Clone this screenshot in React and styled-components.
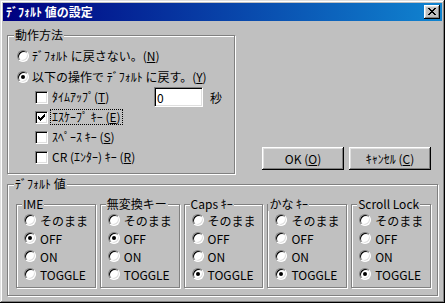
import React from "react";
import styled, { createGlobalStyle } from "styled-components";

const GlobalStyle = createGlobalStyle`
  html, body {
    margin: 0;
    padding: 0;
    background: #c0c0c0;
  }
  body {
    font-family: "Noto Sans CJK JP", "Noto Sans", sans-serif;
    font-size: 12px;
    color: #000;
  }
`;

const Window = styled.div`
  width: 445px;
  height: 303px;
  box-sizing: border-box;
  padding: 3px;
  background: #c0c0c0;
  box-shadow: inset -1px -1px #000, inset 1px 1px #dfdfdf,
    inset -2px -2px #808080, inset 2px 2px #fff;
  display: flex;
  flex-direction: column;
`;

const TitleBar = styled.div`
  flex: none;
  height: 18px;
  display: flex;
  align-items: center;
  justify-content: space-between;
  padding: 0 2px 0 3px;
  background: linear-gradient(to right, #000080, #1084d0);
  color: #fff;
  font-weight: bold;
  line-height: 18px;
`;

const raised = `
  box-shadow: inset -1px -1px #000, inset 1px 1px #fff,
    inset -2px -2px #808080, inset 2px 2px #dfdfdf;
`;

const sunken = `
  border: 1px solid;
  border-color: #808080 #fff #fff #808080;
  box-shadow: inset 1px 1px #000, inset -1px -1px #dfdfdf;
  background: #fff;
`;

const CloseButton = styled.button`
  width: 16px;
  height: 14px;
  padding: 0 0 1px 0;
  border: none;
  background: #c0c0c0;
  ${raised}
  display: flex;
  align-items: center;
  justify-content: center;
`;

const Body = styled.div`
  flex: 1;
  display: flex;
  flex-direction: column;
  padding: 7px 4px 0 4px;
`;

const TopRow = styled.div`
  display: flex;
`;

const Group = styled.fieldset`
  margin: 0;
  min-width: 0;
  box-sizing: border-box;
  border: 1px solid #808080;
  box-shadow: inset 1px 1px #fff, 1px 1px #fff;
  padding: ${(p) => p.$pad};
`;

const Legend = styled.legend`
  padding: 0 1px;
  margin-left: ${(p) => p.$shift}px;
  line-height: 14px;
  background: #c0c0c0;
`;

const ActionGroup = styled(Group)`
  width: 228px;
  flex: none;
`;

const RadioCircle = styled.span`
  flex: none;
  width: 12px;
  height: 12px;
  box-sizing: border-box;
  border-radius: 50%;
  ${sunken}
  display: inline-flex;
  align-items: center;
  justify-content: center;
  &::after {
    content: "";
    width: 4px;
    height: 4px;
    border-radius: 50%;
    background: ${(p) => (p.$checked ? "#000" : "transparent")};
  }
`;

const CheckSquare = styled.span`
  flex: none;
  width: 13px;
  height: 13px;
  box-sizing: border-box;
  ${sunken}
  display: inline-flex;
  align-items: center;
  justify-content: center;
`;

const MainRow = styled.div`
  height: 21px;
  display: flex;
  align-items: center;
  gap: 3px;
  white-space: nowrap;
`;

const CheckRow = styled.div`
  height: 20px;
  display: flex;
  align-items: center;
  padding-left: 18px;
  white-space: nowrap;
`;

const CheckText = styled.span`
  margin-left: 3px;
  padding: 0 1px;
  line-height: 14px;
  width: ${(p) => (p.$width ? `${p.$width}px` : "auto")};
  outline: ${(p) => (p.$focused ? "1px dotted #000" : "none")};
`;

const Key = styled.u`
  text-decoration: underline;
  text-underline-offset: 1px;
`;

const SecondsInput = styled.input`
  width: 49px;
  height: 20px;
  box-sizing: border-box;
  ${sunken}
  padding: 0 2px;
  font: inherit;
  color: #000;
  outline: none;
`;

const Unit = styled.span`
  margin-left: 7px;
`;

const ButtonArea = styled.div`
  flex: 1;
  display: flex;
  justify-content: flex-end;
  align-items: flex-end;
  gap: 5px;
  padding: 0 7px 4px 0;
`;

const Button = styled.button`
  width: 82px;
  height: 23px;
  padding: 0;
  border: none;
  background: #c0c0c0;
  ${raised}
  font: inherit;
  color: #000;
  white-space: nowrap;
`;

const DefaultsGroup = styled(Group)`
  margin-top: 3px;
`;

const ModeRow = styled.div`
  display: flex;
  gap: 4px;
`;

const ModeGroup = styled(Group)`
  flex: 1;
`;

const ModeOption = styled.div`
  height: 18px;
  display: flex;
  align-items: center;
  gap: 4px;
  white-space: nowrap;
`;

const CheckMark = () => (
  <svg width="7" height="7" viewBox="0 0 7 7" shapeRendering="crispEdges">
    <path
      d="M6 0h1v3h-1zM5 1h1v3h-1zM4 2h1v3h-1zM3 3h1v3h-1zM2 4h1v3h-1zM1 3h1v3h-1zM0 2h1v3h-1z"
      fill="#000"
    />
  </svg>
);

const CloseGlyph = () => (
  <svg width="8" height="7" viewBox="0 0 8 7" shapeRendering="crispEdges">
    <path
      d="M0 0h2v1h-2zM6 0h2v1h-2zM1 1h2v1h-2zM5 1h2v1h-2zM2 2h4v1h-4zM3 3h2v1h-2zM2 4h4v1h-4zM1 5h2v1h-2zM5 5h2v1h-2zM0 6h2v1h-2zM6 6h2v1h-2z"
      fill="#000"
    />
  </svg>
);

const modes = [
  { name: "IME", value: "OFF", shift: -2 },
  { name: "無変換キー", value: "OFF", shift: -2 },
  { name: "Caps ｷｰ", value: "TOGGLE", shift: -2 },
  { name: "かな ｷｰ", value: "TOGGLE", shift: -7 },
  { name: "Scroll Lock", value: "TOGGLE", shift: -2 },
];

const options = ["そのまま", "OFF", "ON", "TOGGLE"];

export default function App() {
  return (
    <>
      <GlobalStyle />
      <Window>
        <TitleBar>
          <span>ﾃﾞﾌｫﾙﾄ 値の設定</span>
          <CloseButton>
            <CloseGlyph />
          </CloseButton>
        </TitleBar>
        <Body>
          <TopRow>
            <ActionGroup $pad="3px 0 6px 9px">
              <Legend $shift={-3}>動作方法</Legend>
              <MainRow>
                <RadioCircle />
                <span>
                  ﾃﾞﾌｫﾙﾄ に戻さない。(<Key>N</Key>)
                </span>
              </MainRow>
              <MainRow>
                <RadioCircle $checked />
                <span>
                  以下の操作で ﾃﾞﾌｫﾙﾄ に戻す。(<Key>Y</Key>)
                </span>
              </MainRow>
              <CheckRow>
                <CheckSquare />
                <CheckText $width={101}>
                  ﾀｲﾑｱｯﾌﾟ(<Key>T</Key>)
                </CheckText>
                <SecondsInput value="0" readOnly />
                <Unit>秒</Unit>
              </CheckRow>
              <CheckRow>
                <CheckSquare>
                  <CheckMark />
                </CheckSquare>
                <CheckText $focused>
                  ｴｽｹｰﾌﾟ ｷｰ (<Key>E</Key>)
                </CheckText>
              </CheckRow>
              <CheckRow>
                <CheckSquare />
                <CheckText>
                  ｽﾍﾟｰｽ ｷｰ (<Key>S</Key>)
                </CheckText>
              </CheckRow>
              <CheckRow>
                <CheckSquare />
                <CheckText>
                  CR (ｴﾝﾀｰ) ｷｰ (<Key>R</Key>)
                </CheckText>
              </CheckRow>
            </ActionGroup>
            <ButtonArea>
              <Button>
                OK (<Key>O</Key>)
              </Button>
              <Button>
                ｷｬﾝｾﾙ (<Key>C</Key>)
              </Button>
            </ButtonArea>
          </TopRow>
          <DefaultsGroup $pad="6px 6px 7px 8px">
            <Legend $shift={-2}>ﾃﾞﾌｫﾙﾄ 値</Legend>
            <ModeRow>
              {modes.map((m) => (
                <ModeGroup key={m.name} $pad="0 0 4px 7px">
                  <Legend $shift={m.shift}>{m.name}</Legend>
                  {options.map((o) => (
                    <ModeOption key={o}>
                      <RadioCircle $checked={o === m.value} />
                      <span>{o}</span>
                    </ModeOption>
                  ))}
                </ModeGroup>
              ))}
            </ModeRow>
          </DefaultsGroup>
        </Body>
      </Window>
    </>
  );
}
